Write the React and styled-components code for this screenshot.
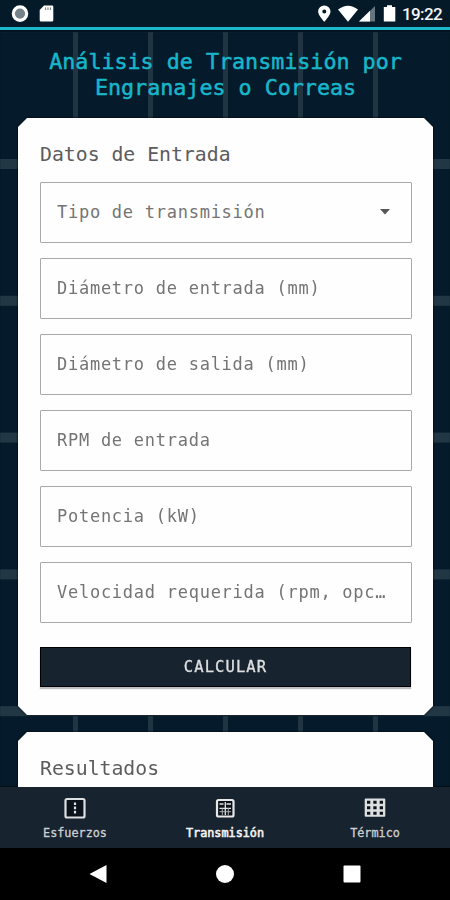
import React, { Fragment } from "react";
import styled, { createGlobalStyle, css } from "styled-components";

const GlobalStyle = createGlobalStyle`
  * {
    box-sizing: border-box;
  }
  body {
    margin: 0;
    background-color: #000;
    font-family: "DejaVu Sans Mono", monospace;
  }
`;

const Screen = styled.div`
  display: flex;
  flex-direction: column;
  width: 450px;
  height: 900px;
  overflow: hidden;
  background-color: #051b2b;
`;

const StatusBar = styled.header`
  flex: none;
  display: flex;
  justify-content: space-between;
  height: 30px;
  border-bottom: 3px solid #1bb9cb;
  background-color: #051a29;
`;

const StatusGroup = styled.div`
  display: flex;
`;

const Time = styled.span`
  width: 50px;
  padding: 4px 0 0 2px;
  color: #f4f6f7;
  font-family: Roboto, sans-serif;
  font-size: 17px;
  font-weight: 500;
  line-height: 20px;
  letter-spacing: -0.6px;
`;

const Content = styled.main`
  flex: 1;
  min-height: 0;
  overflow: hidden;
  padding: 19px 17px 0 18px;
  background-image: repeating-linear-gradient(
      90deg,
      #213442 0 5px,
      transparent 5px 75px
    ),
    linear-gradient(#213744 10px, transparent 10px);
  background-size: 375px 100%, 100% 136.8px;
  background-position: 73px 0, 0 129px;
  background-repeat: no-repeat, repeat;
  box-shadow: inset 0 2px 1px #00101c;
`;

const Title = styled.h1`
  margin: 0;
  color: #18b6ca;
  font-size: 21.7px;
  font-weight: 400;
  line-height: 26px;
  text-align: center;
  -webkit-text-stroke: 0.5px #18b6ca;
`;

const CardShadow = styled.div`
  margin-top: 17px;
  filter: drop-shadow(0 0 1px #000);
`;

const Card = styled.section`
  height: ${props => props.$height}px;
  padding: 23px 21px 0 22px;
  background-color: #fefefe;
  clip-path: polygon(
    9px 0,
    calc(100% - 9px) 0,
    100% 9px,
    100% calc(100% - 9px),
    calc(100% - 9px) 100%,
    9px 100%,
    0 calc(100% - 9px),
    0 9px
  );
`;

const CardTitle = styled.h2`
  margin: 0 0 13px;
  color: #5c5c5c;
  font-size: 19.8px;
  font-weight: 400;
  line-height: 28px;
`;

const Fields = styled.div`
  display: flex;
  flex-direction: column;
  gap: 15px;
`;

const Field = styled.div`
  display: flex;
  align-items: center;
  justify-content: space-between;
  height: 61px;
  padding: 0 21px 1px 16px;
  border: 1.5px solid #aaa;
  border-radius: 1px;
`;

const Label = styled.span`
  color: #747474;
  font-size: 17px;
  letter-spacing: 0.74px;
  white-space: nowrap;
`;

const Button = styled.button`
  display: block;
  width: 371px;
  height: 40px;
  margin: 24px 0 0;
  padding: 0;
  border: 1.5px solid #000;
  background-color: #17232e;
  box-shadow: 0 2px 1px rgba(0, 0, 0, 0.25);
  color: #dedfe0;
  font-family: inherit;
  font-size: 15.5px;
  letter-spacing: 1.1px;
  -webkit-text-stroke: 0.35px #dedfe0;
`;

const TabBar = styled.nav`
  flex: none;
  display: flex;
  height: 61px;
  background-color: #17232e;
  box-shadow: 0 -1px 1px rgba(0, 0, 0, 0.5);
`;

const Tab = styled.div`
  flex: 1;
  display: flex;
  flex-direction: column;
  align-items: center;
  padding-top: 10px;
  color: #cdd0d2;
  font-size: 11.8px;
  line-height: 16px;
  -webkit-text-stroke: 0.3px currentColor;

  svg {
    margin-bottom: 6px;
  }

  ${props =>
    props.$active &&
    css`
      color: #f2f3f3;
      -webkit-text-stroke-width: 0.6px;
    `}
`;

const SystemBar = styled.footer`
  flex: none;
  display: flex;
  align-items: center;
  justify-content: space-around;
  height: 52px;
  padding: 0 35px;
  background-color: #000;
`;

const NotificationIcons = () => (
  <svg width="60" height="27" viewBox="0 0 60 27">
    <circle cx="20" cy="13.6" r="6.7" fill="#75828a" stroke="#fff" strokeWidth="3.2" />
    <path
      d="M44 5.5h8q1.3 0 1.3 1.3V20q0 1.5-1.3 1.5H41q-1.3 0-1.3-1.5V10z"
      fill="#fff"
    />
    <path d="M45.5 7.5v2.5M48 7.5v2.5M50.5 7.5v2.5" stroke="#7c878e" strokeWidth="1.2" />
  </svg>
);

const SignalIcons = () => (
  <svg width="85" height="27" viewBox="315 0 85 27">
    <path
      d="M324.3 5.5a6.1 6.1 0 0 1 6.2 6.1c0 4-6.2 10.2-6.2 10.2s-6.2-6.2-6.2-10.2a6.1 6.1 0 0 1 6.2-6.1zm0 4a2 2 0 1 0 0 4 2 2 0 0 0 0-4z"
      fill="#fff"
    />
    <path d="M338 9.6q10-7.6 20 0L348 21.8z" fill="#fff" />
    <path d="M375 6v15.5h-16z" fill="#667680" />
    <path d="M370 10.8v10.7H359z" fill="#fff" />
    <path d="M387 5.3h5v1.6h3.3v14.6h-11.5V6.9h3.2z" fill="#fff" />
  </svg>
);

const StressIcon = () => (
  <svg width="22" height="22" viewBox="0 0 22 22">
    <rect
      x="1.5"
      y="2"
      width="19"
      height="18.5"
      rx="1.5"
      fill="#0b121a"
      stroke="#dedfe0"
      strokeWidth="2.2"
    />
    <path d="M11 5.5v2.6M11 9.6v2.6M11 13.8v2.6" stroke="#dedfe0" strokeWidth="2.2" />
  </svg>
);

const TransmissionIcon = () => (
  <svg width="22" height="22" viewBox="0 0 22 22">
    <rect
      x="3"
      y="3"
      width="16.5"
      height="16.5"
      rx="1.5"
      fill="#0b121a"
      stroke="#e8e8e8"
      strokeWidth="2.2"
    />
    <path d="M5.5 7h4M12.5 7H17M5.5 11.3H17M11.3 5v13" stroke="#e4e5e6" strokeWidth="1.3" />
    <path d="M5.5 14.7H17M8.3 11v7M14.3 11v7" stroke="#a8adb1" strokeWidth="1" />
  </svg>
);

const ThermalIcon = () => (
  <svg width="22" height="22" viewBox="0 0 22 22">
    <rect x="0.7" y="1.5" width="20.6" height="18.3" rx="1" fill="#dedfe0" />
    <path
      d="M3 3.8h3.3v3H3zm6.3 0h3.3v3H9.3zm6.4 0H19v3h-3.3zM3 9.3h3.3v3H3zm6.3 0h3.3v3H9.3zm6.4 0H19v3h-3.3zM3 14.8h3.3v3H3zm6.3 0h3.3v3H9.3zm6.4 0H19v3h-3.3z"
      fill="#0b121a"
    />
  </svg>
);

const fields = [
  { label: "Tipo de transmisión", select: true },
  { label: "Diámetro de entrada (mm)" },
  { label: "Diámetro de salida (mm)" },
  { label: "RPM de entrada" },
  { label: "Potencia (kW)" },
  { label: "Velocidad requerida (rpm, opc…" }
];

const App = () => (
  <Fragment>
    <GlobalStyle />
    <Screen>
      <StatusBar>
        <NotificationIcons />
        <StatusGroup>
          <SignalIcons />
          <Time>19:22</Time>
        </StatusGroup>
      </StatusBar>
      <Content>
        <Title>
          Análisis de Transmisión por
          <br />
          Engranajes o Correas
        </Title>
        <CardShadow>
          <Card $height={597}>
            <CardTitle>Datos de Entrada</CardTitle>
            <Fields>
              {fields.map(({ label, select }) => (
                <Field key={label}>
                  <Label>{label}</Label>
                  {select && (
                    <svg width="10" height="6" viewBox="0 0 10 6">
                      <path d="M0 0h10L5 5.5z" fill="#555" />
                    </svg>
                  )}
                </Field>
              ))}
            </Fields>
            <Button>CALCULAR</Button>
          </Card>
        </CardShadow>
        <CardShadow>
          <Card $height={300}>
            <CardTitle>Resultados</CardTitle>
          </Card>
        </CardShadow>
      </Content>
      <TabBar>
        <Tab>
          <StressIcon />
          Esfuerzos
        </Tab>
        <Tab $active>
          <TransmissionIcon />
          Transmisión
        </Tab>
        <Tab>
          <ThermalIcon />
          Térmico
        </Tab>
      </TabBar>
      <SystemBar>
        <svg width="18" height="18" viewBox="0 0 18 18">
          <path d="M17.5 0v18L0.5 9z" fill="#fff" />
        </svg>
        <svg width="18" height="18" viewBox="0 0 18 18">
          <circle cx="9" cy="9" r="9" fill="#fff" />
        </svg>
        <svg width="18" height="18" viewBox="0 0 18 18">
          <rect x="0.5" y="0.5" width="17" height="17" rx="1" fill="#fff" />
        </svg>
      </SystemBar>
    </Screen>
  </Fragment>
);

export default App;
